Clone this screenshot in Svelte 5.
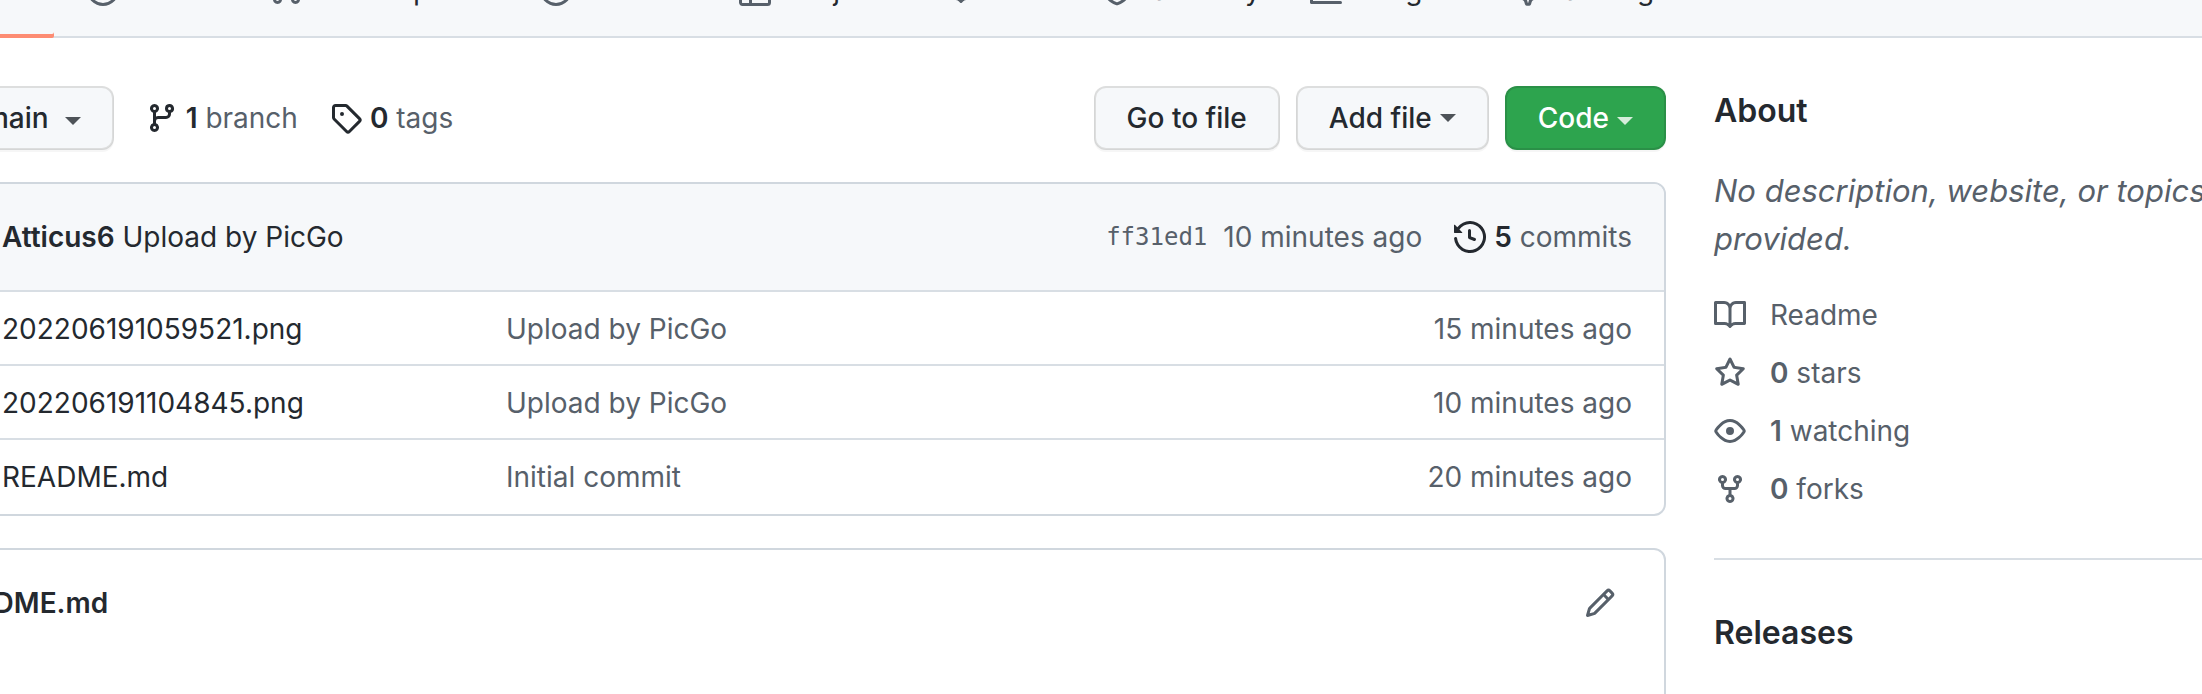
<script>
  const icons = {
    code: 'M4.72 3.22a.75.75 0 011.06 1.06L2.06 8l3.72 3.72a.75.75 0 11-1.06 1.06L.47 8.53a.75.75 0 010-1.06l4.25-4.25zm6.56 0a.75.75 0 10-1.06 1.06L13.94 8l-3.72 3.72a.75.75 0 101.06 1.06l4.25-4.25a.75.75 0 000-1.06l-4.25-4.25z',
    issue: 'M8 9.5a1.5 1.5 0 100-3 1.5 1.5 0 000 3zM8 0a8 8 0 100 16A8 8 0 008 0zM1.5 8a6.5 6.5 0 1113 0 6.5 6.5 0 01-13 0z',
    pull: 'M7.177 3.073L9.573.677A.25.25 0 0110 .854v4.792a.25.25 0 01-.427.177L7.177 3.427a.25.25 0 010-.354zM3.75 2.5a.75.75 0 100 1.5.75.75 0 000-1.5zm-2.25.75a2.25 2.25 0 113 2.122v5.256a2.251 2.251 0 11-1.5 0V5.372A2.25 2.25 0 011.5 3.25zM11 2.5h-1V4h1a1 1 0 011 1v5.628a2.251 2.251 0 101.5 0V5A2.5 2.5 0 0011 2.5zm1 10.25a.75.75 0 111.5 0 .75.75 0 01-1.5 0zM3.75 12a.75.75 0 100 1.5.75.75 0 000-1.5z',
    play: 'M1.5 8a6.5 6.5 0 1113 0 6.5 6.5 0 01-13 0zM8 0a8 8 0 100 16A8 8 0 008 0zM6.379 5.227A.25.25 0 006 5.442v5.117a.25.25 0 00.379.214l4.264-2.559a.25.25 0 000-.428L6.379 5.227z',
    table: 'M1.75 0A1.75 1.75 0 000 1.75v12.5C0 15.216.784 16 1.75 16h12.5A1.75 1.75 0 0016 14.25V1.75A1.75 1.75 0 0014.25 0H1.75zM1.5 1.75a.25.25 0 01.25-.25H5V5H1.5V1.75zM6.5 5V1.5h7.75a.25.25 0 01.25.25V5h-8zm8 1.5v7.75a.25.25 0 01-.25.25H6.5v-8h8zM1.5 6.5H5v8H1.75a.25.25 0 01-.25-.25V6.5z',
    book: 'M0 1.75A.75.75 0 01.75 1h4.253c1.227 0 2.317.59 3 1.501A3.744 3.744 0 0111.006 1h4.245a.75.75 0 01.75.75v10.5a.75.75 0 01-.75.75h-4.507a2.25 2.25 0 00-1.591.659l-.622.621a.75.75 0 01-1.06 0l-.622-.621A2.25 2.25 0 005.258 13H.75a.75.75 0 01-.75-.75V1.75zm8.755 3a2.25 2.25 0 012.25-2.25H14.5v9h-3.757c-.71 0-1.4.201-1.992.572l.004-7.322zm-1.504 7.324l.004-5.073-.002-2.253A2.25 2.25 0 005.003 2.5H1.5v9h3.757a3.75 3.75 0 011.994.574z',
    shield: 'M7.467.133a1.75 1.75 0 011.066 0l5.25 1.68A1.75 1.75 0 0115 3.48V7c0 1.566-.32 3.182-1.303 4.682-.983 1.498-2.585 2.813-5.032 3.855a1.7 1.7 0 01-1.33 0c-2.447-1.042-4.049-2.357-5.032-3.855C1.32 10.182 1 8.566 1 7V3.48a1.75 1.75 0 011.217-1.667l5.25-1.68zm.61 1.429a.25.25 0 00-.153 0l-5.25 1.68a.25.25 0 00-.174.238V7c0 1.358.275 2.666 1.057 3.86.784 1.194 2.121 2.34 4.366 3.297a.2.2 0 00.154 0c2.245-.956 3.582-2.104 4.366-3.298C13.225 9.666 13.5 8.36 13.5 7V3.48a.25.25 0 00-.174-.237l-5.25-1.68z',
    graph: 'M1.5 1.75a.75.75 0 00-1.5 0v12.5c0 .414.336.75.75.75h14.5a.75.75 0 000-1.5H1.5V1.75zm14.28 2.53a.75.75 0 00-1.06-1.06L10 7.94 7.53 5.47a.75.75 0 00-1.06 0L3.22 8.72a.75.75 0 001.06 1.06L7 7.06l2.47 2.47a.75.75 0 001.06 0l5.25-5.25z',
    branch: 'M11.75 2.5a.75.75 0 100 1.5.75.75 0 000-1.5zm-2.25.75a2.25 2.25 0 113 2.122V6A2.5 2.5 0 0110 8.5H6a1 1 0 00-1 1v1.128a2.251 2.251 0 11-1.5 0V5.372a2.25 2.25 0 111.5 0v1.836A2.492 2.492 0 016 7h4a1 1 0 001-1v-.628A2.25 2.25 0 019.5 3.25zM4.25 12a.75.75 0 100 1.5.75.75 0 000-1.5zM3.5 3.25a.75.75 0 111.5 0 .75.75 0 01-1.5 0z',
    tag: 'M2.5 7.775V2.75a.25.25 0 01.25-.25h5.025a.25.25 0 01.177.073l6.25 6.25a.25.25 0 010 .354l-5.025 5.025a.25.25 0 01-.354 0l-6.25-6.25a.25.25 0 01-.073-.177zm-1.5 0V2.75C1 1.784 1.784 1 2.75 1h5.025c.464 0 .91.184 1.238.513l6.25 6.25a1.75 1.75 0 010 2.474l-5.026 5.026a1.75 1.75 0 01-2.474 0l-6.25-6.25A1.75 1.75 0 011 7.775zM6 5a1 1 0 100 2 1 1 0 000-2z',
    history: 'M1.643 3.143L.427 1.927A.25.25 0 000 2.104V5.75c0 .138.112.25.25.25h3.646a.25.25 0 00.177-.427L2.715 4.215a6.5 6.5 0 11-1.18 4.458.75.75 0 10-1.493.154 8.001 8.001 0 101.6-5.684zM7.75 4a.75.75 0 01.75.75v2.992l2.028.812a.75.75 0 01-.557 1.392l-2.5-1A.75.75 0 017 8.25v-3.5A.75.75 0 017.75 4z',
    star: 'M8 .25a.75.75 0 01.673.418l1.882 3.815 4.21.612a.75.75 0 01.416 1.279l-3.046 2.97.719 4.192a.75.75 0 01-1.088.791L8 12.347l-3.766 1.98a.75.75 0 01-1.088-.79l.72-4.194L.818 6.374a.75.75 0 01.416-1.28l4.21-.611L7.327.668A.75.75 0 018 .25zm0 2.445L6.615 5.5a.75.75 0 01-.564.41l-3.097.45 2.24 2.184a.75.75 0 01.216.664l-.528 3.084 2.769-1.456a.75.75 0 01.698 0l2.77 1.456-.53-3.084a.75.75 0 01.216-.664l2.24-2.183-3.096-.45a.75.75 0 01-.564-.41L8 2.694v.001z',
    eye: 'M1.679 7.932c.412-.621 1.242-1.75 2.366-2.717C5.175 4.242 6.527 3.5 8 3.5c1.473 0 2.824.742 3.955 1.715 1.124.967 1.954 2.096 2.366 2.717a.119.119 0 010 .136c-.412.621-1.242 1.75-2.366 2.717C10.825 11.758 9.473 12.5 8 12.5c-1.473 0-2.824-.742-3.955-1.715C2.92 9.818 2.09 8.69 1.679 8.068a.119.119 0 010-.136zM8 2c-1.981 0-3.67.992-4.933 2.078C1.797 5.169.88 6.423.43 7.1a1.619 1.619 0 000 1.798c.45.678 1.367 1.932 2.637 3.024C4.329 13.008 6.019 14 8 14c1.981 0 3.67-.992 4.933-2.078 1.27-1.091 2.187-2.345 2.637-3.023a1.619 1.619 0 000-1.798c-.45-.678-1.367-1.932-2.637-3.023C11.671 2.992 9.981 2 8 2zm0 8a2 2 0 100-4 2 2 0 000 4z',
    fork: 'M5 3.25a.75.75 0 11-1.5 0 .75.75 0 011.5 0zm0 2.122a2.25 2.25 0 10-1.5 0v.878A2.25 2.25 0 005.75 8.5h1.5v2.128a2.251 2.251 0 101.5 0V8.5h1.5a2.25 2.25 0 002.25-2.25v-.878a2.25 2.25 0 10-1.5 0v.878a.75.75 0 01-.75.75h-4.5A.75.75 0 015 6.25v-.878zm3.75 7.378a.75.75 0 11-1.5 0 .75.75 0 011.5 0zm3-8.75a.75.75 0 100-1.5.75.75 0 000 1.5z',
    pencil: 'M11.013 1.427a1.75 1.75 0 012.474 0l1.086 1.086a1.75 1.75 0 010 2.474l-8.61 8.61c-.21.21-.47.364-.756.445l-3.251.93a.75.75 0 01-.927-.928l.929-3.25a1.75 1.75 0 01.445-.758l8.61-8.61zm1.414 1.06a.25.25 0 00-.354 0L10.811 3.75l1.439 1.44 1.263-1.263a.25.25 0 000-.354l-1.086-1.086zM11.189 6.25L9.75 4.81l-6.286 6.287a.25.25 0 00-.064.108l-.558 1.953 1.953-.558a.249.249 0 00.108-.064l6.286-6.286z'
  };

  const gear = 'M7.429 1.525a6.593 6.593 0 011.142 0c.036.003.108.036.137.146l.289 1.105c.147.56.55.967.997 1.189.174.086.341.183.501.29.417.278.97.423 1.53.27l1.102-.303c.11-.03.175.016.195.046.219.31.41.641.573.989.014.031.022.11-.059.19l-.815.806c-.411.406-.562.957-.53 1.456a4.588 4.588 0 010 .582c-.032.499.119 1.05.53 1.456l.815.806c.08.08.073.159.059.19a6.494 6.494 0 01-.573.99c-.02.029-.086.074-.195.045l-1.103-.303c-.559-.153-1.112-.008-1.529.27-.16.107-.327.204-.5.29-.449.222-.851.628-.998 1.189l-.289 1.105c-.029.11-.101.143-.137.146a6.613 6.613 0 01-1.142 0c-.036-.003-.108-.037-.137-.146l-.289-1.105c-.147-.56-.55-.967-.997-1.189a4.502 4.502 0 01-.501-.29c-.417-.278-.97-.423-1.53-.27l-1.102.303c-.11.03-.175-.016-.195-.046a6.492 6.492 0 01-.573-.989c-.014-.031-.022-.11.059-.19l.815-.806c.411-.406.562-.957.53-1.456a4.587 4.587 0 010-.582c.032-.499-.119-1.05-.53-1.456l-.815-.806c-.08-.08-.073-.159-.059-.19a6.44 6.44 0 01.573-.99c.02-.029.086-.075.195-.045l1.103.303c.559.153 1.112.008 1.529-.27.16-.107.327-.204.5-.29.449-.222.851-.628.998-1.189l.289-1.105c.029-.11.101-.143.137-.146z';

  const tabs = [
    ['code', 'Code'],
    ['issue', 'Issues'],
    ['pull', 'Pull requests'],
    ['play', 'Actions'],
    ['table', 'Projects'],
    ['book', 'Wiki'],
    ['shield', 'Security'],
    ['graph', 'Insights'],
    ['gear', 'Settings']
  ];

  const files = [
    ['202206191059521.png', 'Upload by PicGo', '15 minutes ago'],
    ['202206191104845.png', 'Upload by PicGo', '10 minutes ago'],
    ['README.md', 'Initial commit', '20 minutes ago']
  ];

  const stats = [
    ['book', '', 'Readme'],
    ['star', '0', 'stars'],
    ['eye', '1', 'watching'],
    ['fork', '0', 'forks']
  ];
</script>

{#snippet icon(name)}
  <svg class="icon" viewBox="0 0 16 16" aria-hidden="true">
    {#if name === 'gear'}
      <g transform="translate(8 8) scale(1.1) translate(-8 -8)" fill="none" stroke="currentColor" stroke-width="1.4">
        <path d={gear} />
        <circle cx="8" cy="8" r="2.2" />
      </g>
    {:else}
      <path d={icons[name]} fill="currentColor" fill-rule="evenodd" />
    {/if}
  </svg>
{/snippet}

<div class="page">
  <nav class="tabs" aria-label="Repository">
    {#each tabs as [name, label], i}
      <a href="#{name}" class="tab" class:active={i === 0}>{@render icon(name)}<span>{label}</span></a>
    {/each}
  </nav>

  <div class="layout">
    <main>
      <div class="toolbar">
        <button type="button" class="btn ref">{@render icon('branch')}<span>main</span><i class="caret low"></i></button>
        <a class="count" href="#branches">{@render icon('branch')}<span><b>1</b> branch</span></a>
        <a class="count" href="#tags">{@render icon('tag')}<span><b>0</b> tags</span></a>
        <div class="actions">
          <button type="button" class="btn">Go to file</button>
          <button type="button" class="btn">Add file<i class="caret"></i></button>
          <button type="button" class="btn primary">Code<i class="caret low"></i></button>
        </div>
      </div>

      <section class="box">
        <header class="commit">
          <span class="avatar"></span>
          <span class="message"><b>Atticus6</b> Upload by PicGo</span>
          <a class="sha" href="#ff31ed1">ff31ed1</a>
          <span class="muted">10 minutes ago</span>
          <a class="commits" href="#commits">{@render icon('history')}<span><b>5</b> commits</span></a>
        </header>
        <table>
          <tbody>
            {#each files as [name, message, time]}
              <tr>
                <td class="name"><a href="#{name}">{name}</a></td>
                <td>{message}</td>
                <td class="time">{time}</td>
              </tr>
            {/each}
          </tbody>
        </table>
      </section>

      <section class="box readme">
        <h2>README.md</h2>
        <button type="button" class="edit" aria-label="Edit">{@render icon('pencil')}</button>
      </section>
    </main>

    <aside>
      <h2>About</h2>
      <p>No description, website, or topics provided.</p>
      <ul>
        {#each stats as [name, value, label]}
          <li>
            <a href="#{label}">{@render icon(name)}<span>{#if value}<b>{value}</b>{' '}{/if}{label}</span></a>
          </li>
        {/each}
      </ul>
      <h2 class="releases">Releases</h2>
    </aside>
  </div>
</div>

<style>
  :global(body) {
    background: #fff;
  }

  .page,
  .page * {
    box-sizing: border-box;
  }

  .page {
    height: 100vh;
    overflow: hidden;
    font: 28px/42px Inter, 'Liberation Sans', sans-serif;
    color: #24292f;
  }

  a {
    color: inherit;
    text-decoration: none;
  }

  b {
    font-weight: 600;
  }

  .icon {
    flex: none;
    width: 32px;
    height: 32px;
    display: block;
  }

  .muted {
    color: #57606a;
  }

  /* Repository tabs */
  .tabs {
    display: flex;
    gap: 17px;
    height: 96px;
    margin-top: -58px;
    margin-left: -99px;
    background: #f6f8fa;
    box-shadow: inset 0 -2px #d8dee4;
  }

  .tab {
    display: flex;
    align-items: center;
    gap: 18px;
    padding: 0 16px;
    white-space: nowrap;
  }

  .tab .icon {
    color: #57606a;
  }

  .tab.active {
    box-shadow: inset 0 -4px #fd8c73;
    border-radius: 0 0 2px 2px;
  }

  /* Page columns */
  .layout {
    display: grid;
    grid-template-columns: minmax(0, 1fr) 592px;
    gap: 48px;
    margin: 48px -104px 0 -88px;
  }

  .toolbar {
    display: flex;
    align-items: center;
    margin-bottom: 32px;
  }

  .btn {
    display: flex;
    align-items: center;
    gap: 8px;
    height: 64px;
    padding: 0 31px;
    border: 2px solid rgba(27, 31, 36, 0.15);
    border-radius: 12px;
    background: #f6f8fa;
    background-clip: padding-box;
    box-shadow: 0 2px 0 rgba(27, 31, 36, 0.04);
    font: inherit;
    font-weight: 500;
    color: #24292f;
    white-space: nowrap;
  }

  .primary {
    background: #2da44e;
    background-clip: border-box;
    background-origin: border-box;
    color: #fff;
  }

  .ref {
    gap: 16px;
    padding-left: 22px;
  }

  .caret {
    border: 8px solid transparent;
    border-top-color: currentColor;
    border-bottom: 0;
    opacity: 0.8;
  }

  .low {
    margin-top: 6px;
  }

  .count {
    display: flex;
    align-items: center;
    gap: 8px;
    margin-left: 32px;
    color: #57606a;
  }

  .count b,
  .count .icon,
  .commits b,
  .commits .icon {
    color: #24292f;
  }

  .actions {
    display: flex;
    gap: 16px;
    margin-left: auto;
  }

  .box {
    border: 2px solid #d0d7de;
    border-radius: 12px;
    overflow: hidden;
  }

  .commit {
    display: flex;
    align-items: center;
    gap: 16px;
    padding: 32px;
    background: #f6f8fa;
  }

  .avatar {
    width: 40px;
    height: 40px;
    border-radius: 50%;
    background: #d0d7de;
  }

  .message {
    margin-right: auto;
  }

  .sha {
    font: 24px/42px 'DejaVu Sans Mono', monospace;
    color: #57606a;
  }

  .commits {
    display: flex;
    align-items: center;
    gap: 8px;
    margin-left: 16px;
    color: #57606a;
  }

  table {
    width: 100%;
    border-collapse: collapse;
    table-layout: fixed;
  }

  tr {
    border-top: 2px solid #d8dee4;
  }

  td {
    padding: 16px 0 14px;
    color: #57606a;
  }

  tr:last-child td {
    padding-bottom: 16px;
  }

  .name {
    width: 592px;
    padding-left: 88px;
    color: #24292f;
  }

  .time {
    padding-right: 32px;
    text-align: right;
  }

  .readme {
    display: flex;
    align-items: center;
    justify-content: space-between;
    margin-top: 32px;
    padding: 32px 48px 200px 24px;
  }

  h2 {
    margin: 0;
    font: inherit;
    font-weight: 600;
  }

  .edit {
    padding: 0;
    border: 0;
    background: none;
    color: #57606a;
  }

  /* Sidebar */
  aside {
    padding-top: 1px;
    color: #57606a;
  }

  aside h2 {
    font-size: 32px;
    line-height: 48px;
    color: #24292f;
  }

  aside p {
    margin: 32px 0 31px;
    font-size: 31px;
    line-height: 48px;
    font-style: italic;
  }

  ul {
    display: grid;
    gap: 16px;
    margin: 0;
    padding: 0;
    list-style: none;
  }

  li a {
    display: flex;
    align-items: center;
    gap: 24px;
  }

  .releases {
    margin-top: 48px;
    padding-top: 49px;
    border-top: 2px solid #d8dee4;
  }
</style>
